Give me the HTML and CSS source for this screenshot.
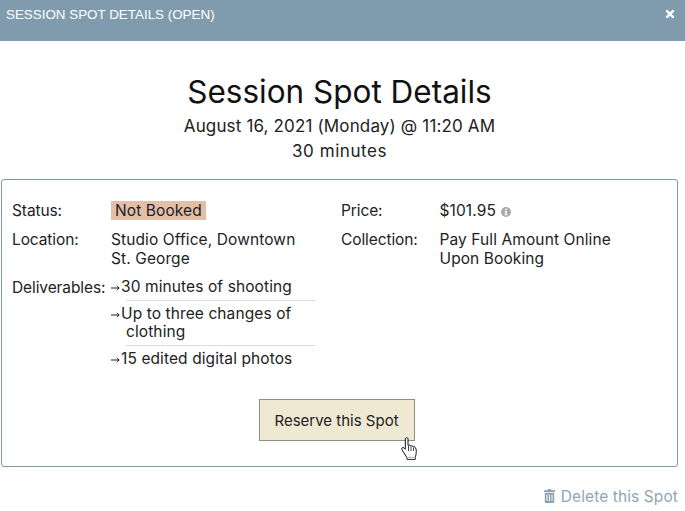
FILE: index.html
```html
<!DOCTYPE html>
<html lang="en">
<head>
<meta charset="utf-8">
<title>Session Spot Details</title>
<link rel="stylesheet" href="styles.css">
</head>
<body>
<header class="bar">
  <span class="bar-title">SESSION SPOT DETAILS (OPEN)</span>
  <svg class="close" viewBox="0 0 10 10" aria-label="Close"><path d="M2.2 0.6 5 3.3 7.8 0.6 9.5 2.3 6.8 5 9.5 7.7 7.8 9.4 5 6.7 2.2 9.4 0.5 7.7 3.2 5 0.5 2.3Z"/></svg>
</header>
<main class="content">
  <h1 class="title">Session Spot Details</h1>
  <p class="sub">August 16, 2021 (Monday) @ 11:20 AM</p>
  <p class="sub sub-duration">30 minutes</p>
  <section class="panel">
    <div class="cols">
      <dl class="col col-left">
        <div class="row"><dt>Status:</dt><dd><span class="badge">Not Booked</span></dd></div>
        <div class="row"><dt>Location:</dt><dd>Studio Office, Downtown<br>St. George</dd></div>
        <div class="row"><dt>Deliverables:</dt><dd>
          <ul class="list">
            <li><svg class="arrow" viewBox="0 0 9 6"><path d="M0 3h8M5.800 1l2.400 2-2.400 2"/></svg>30 minutes of shooting</li>
            <li><svg class="arrow" viewBox="0 0 9 6"><path d="M0 3h8M5.800 1l2.400 2-2.400 2"/></svg>Up to three changes of clothing</li>
            <li><svg class="arrow" viewBox="0 0 9 6"><path d="M0 3h8M5.800 1l2.400 2-2.400 2"/></svg>15 edited digital photos</li>
          </ul>
        </dd></div>
      </dl>
      <dl class="col col-right">
        <div class="row"><dt>Price:</dt><dd>$101.95 <svg class="info" viewBox="0 0 10 10"><circle cx="5" cy="5" r="5" fill="#a9a9a9"/><rect x="4.2" y="1.7" width="1.7" height="1.5" fill="#fff"/><path d="M3.6 4h2.3v3.3h.7v1H3.6v-1h.7V5h-.7z" fill="#fff"/></svg></dd></div>
        <div class="row"><dt>Collection:</dt><dd>Pay Full Amount Online<br>Upon Booking</dd></div>
      </dl>
    </div>
    <div class="action">
      <button class="reserve" type="button">Reserve this Spot</button>
      <svg class="cursor" viewBox="0 0 17 23"><path d="M4.300 1.700c.2-1.300 2.500-1.300 2.700 0v6.800l.6-.2c.9-.5 1.900-.2 2.100.6.800-.5 1.900-.2 2.100.7.900-.5 2.200 0 2.400 1l.9 1.500c.3 2.400.2 4.800-.5 7l-.5 3.600H6.300l-.5-2.300L1 12.800c-1.100-1.500.7-3 2-1.900l1.300 1.300z" fill="#fff" stroke="#111" stroke-width="1" stroke-linejoin="round"/><path d="M7.500 9v5M10 9.500v4.500M12.500 10.500v3.500" stroke="#111" stroke-width=".8" fill="none"/><path d="M7 20.500h7.500" stroke="#bbb" stroke-width="1.500"/></svg>
    </div>
  </section>
  <footer class="foot">
    <a class="delete" href="#"><svg class="trash" viewBox="0 0 12 14"><path d="M4 1.200 4.600 0h2.800L8 1.200h3.500V3H.500V1.200zM1.300 3.800h9.400V13c0 .6-.4 1-1 1H2.300c-.6 0-1-.4-1-1zM3 5.500V12h1V5.500zm2.500 0V12h1V5.500zm2.500 0V12h1V5.500z" fill-rule="evenodd"/></svg> Delete this Spot</a>
  </footer>
</main>
</body>
</html>
```
FILE: styles.css
```css
* { box-sizing: border-box; }
html, body { margin: 0; padding: 0; }
body {
  width: 685px;
  height: 511px;
  overflow: hidden;
  background: #fff;
  color: #222;
  font-family: "Inter", "Liberation Sans", sans-serif;
  font-size: 15.5px;
  letter-spacing: .1px;
  line-height: 19px;
}
.bar {
  height: 41px;
  background: #809bad;
  color: #fff;
  display: flex;
  justify-content: space-between;
  align-items: flex-start;
  padding: 6px 10px 0 6px;
}
.bar-title { font-family: "Liberation Sans", sans-serif; font-size: 13.4px; line-height: 17px; letter-spacing: 0; }
.close { width: 10px; height: 10px; fill: #fff; margin-top: 3px; }
.content { padding: 0 7px 0 1px; }
.title {
  margin: 29px 0 0;
  font-size: 31.5px;
  line-height: 44px;
  font-weight: 400;
  letter-spacing: 0;
  text-align: center;
  color: #111;
}
.sub { margin: 0; text-align: center; font-size: 17px; letter-spacing: .15px; line-height: 25px; color: #222; }
.sub-duration { letter-spacing: .55px; }
.panel {
  margin-top: 15px;
  height: 288px;
  border: 1px solid #7f99a5;
  border-radius: 3px;
  padding: 21px 10px 0;
}
.cols { display: flex; height: 198px; }
.col { margin: 0; }
.col-left { width: 329px; }
.col-right { flex: 1; }
.row { display: flex; margin-bottom: 10px; }
dt { width: 99px; flex: none; letter-spacing: -.1px; }
.col-right dt { width: 98.5px; }
dd { margin: 0; }
.col-left dd { width: 204px; }
.badge { background: #e3bfa8; padding: 0 4.5px 0 4px; display: inline-block; }
.info { width: 10px; height: 10px; vertical-align: -1px; margin-left: 1px; }
.list { list-style: none; margin: 0; padding: 0; }
.list li { line-height: 18.5px; margin: 0 0 4px 15px; padding-bottom: 3px; text-indent: -15px; border-bottom: 1px solid #ddd; }
.list li:last-child { border-bottom: 0; }
.arrow { width: 9px; height: 6px; margin-right: 1px; vertical-align: 1px; fill: none; stroke: #222; stroke-width: 1; }
.action { display: flex; justify-content: center; position: relative; padding-right: 6px; }
.reserve {
  width: 156px;
  height: 42px;
  background: #efe8d2;
  border: 1px solid #918f80;
  color: #222;
  font: inherit;
  font-size: 15px;
  padding: 0;
}
.cursor { position: absolute; left: 389px; top: 38px; width: 17px; height: 23px; }
.foot { display: flex; justify-content: flex-end; margin-top: 20px; }
.delete { color: #8fa6b5; text-decoration: none; }
.trash { width: 13px; height: 14px; fill: #8ba3b2; vertical-align: -1px; }
```
